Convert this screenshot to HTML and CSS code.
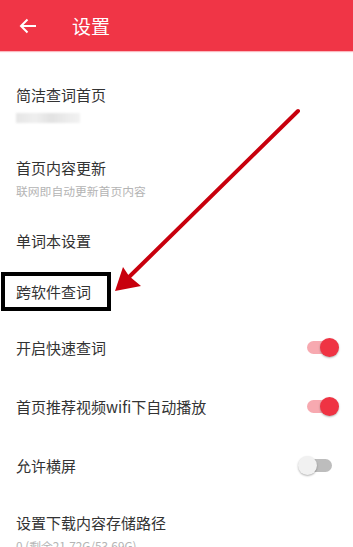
FILE: index.html
```html
<!DOCTYPE html>
<html lang="zh-CN">
<head>
    <meta charset="UTF-8">
    <meta name="viewport" content="width=device-width, initial-scale=1.0">
    <title>设置</title>
    <link rel="stylesheet" href="styles.css">
</head>
<body>
    <header class="top-bar">
        <button class="back-button">
            <svg viewBox="0 0 18 16">
                <path d="M17 8H2M8.5 1.5L2 8l6.5 6.5"></path>
            </svg>
        </button>
        <h1>设置</h1>
    </header>

    <ul class="settings-list">
        <li class="setting">
            <div class="setting-text">
                <span class="title">简洁查词首页</span>
                <span class="sub"><i class="blurred"></i></span>
            </div>
        </li>
        <li class="setting">
            <div class="setting-text">
                <span class="title">首页内容更新</span>
                <span class="sub">联网即自动更新首页内容</span>
            </div>
        </li>
        <li class="setting setting-tight">
            <div class="setting-text">
                <span class="title">单词本设置</span>
            </div>
        </li>
        <li class="setting">
            <div class="setting-text">
                <span class="title">跨软件查词</span>
            </div>
        </li>
        <li class="setting setting-switch">
            <div class="setting-text">
                <span class="title">开启快速查词</span>
            </div>
            <span class="switch on"></span>
        </li>
        <li class="setting setting-switch">
            <div class="setting-text">
                <span class="title">首页推荐视频wifi下自动播放</span>
            </div>
            <span class="switch on"></span>
        </li>
        <li class="setting setting-switch">
            <div class="setting-text">
                <span class="title">允许横屏</span>
            </div>
            <span class="switch"></span>
        </li>
        <li class="setting setting-last">
            <div class="setting-text">
                <span class="title">设置下载内容存储路径</span>
                <span class="sub">0 (剩余21.72G/53.69G)</span>
            </div>
        </li>
    </ul>

    <!-- annotation drawn over the screenshot -->
    <div class="mark-box"></div>
    <svg class="mark-arrow" viewBox="0 0 353 547">
        <line x1="298" y1="111" x2="127" y2="279"></line>
        <polygon points="115,291 123,267 129,276 141,286"></polygon>
    </svg>
</body>
</html>
```

FILE: styles.css
```css
body {
    margin: 0;
    height: 547px;
    overflow: hidden;
    background: #fff;
    font-family: "Noto Sans CJK SC", "Noto Sans", sans-serif;
    color: #333;
    position: relative;
}

.top-bar {
    height: 51px;
    background-color: #f03546;
    display: flex;
    align-items: center;
    box-shadow: 0 1px 1px rgba(240, 53, 70, 0.35);
}

.back-button {
    background: none;
    border: none;
    padding: 0;
    margin-left: 19px;
    width: 18px;
    height: 16px;
    display: flex;
}

.back-button svg {
    width: 18px;
    height: 16px;
    fill: none;
    stroke: #fff;
    stroke-width: 2;
}

.top-bar h1 {
    margin: 0 0 0 35px;
    font-size: 19px;
    font-weight: normal;
    color: #fff;
    line-height: 1;
}

.settings-list {
    list-style: none;
    margin: 0;
    padding: 18px 0 0;
}

.setting {
    display: flex;
    align-items: center;
    padding: 16px 13px 16px 16px;
}

.setting-tight {
    padding-bottom: 15px;
}

.setting-switch {
    padding-top: 19.5px;
    padding-bottom: 19.5px;
}

.setting-last {
    padding-top: 18px;
}

.setting-text {
    flex: 1;
    display: flex;
    flex-direction: column;
}

.title {
    font-size: 15px;
    line-height: 20px;
}

.sub {
    margin-top: 5px;
    height: 16px;
    font-size: 11.8px;
    line-height: 16px;
    color: #b4b4b4;
    display: flex;
    align-items: center;
}

.blurred {
    display: block;
    width: 64px;
    height: 10px;
    background: linear-gradient(90deg, #e6e6e6, #efefef 30%, #e2e2e2 55%, #ececec 80%, #f2f2f2);
    filter: blur(1px);
}

/* 开关 */
.switch {
    position: relative;
    width: 26px;
    height: 13px;
    border-radius: 7px;
    background-color: #bdbdbd;
    margin-right: 8px;
}

.switch::after {
    content: "";
    position: absolute;
    top: -3px;
    left: -8px;
    width: 19px;
    height: 19px;
    border-radius: 50%;
    background-color: #f1f1f1;
    box-shadow: 0 1px 2px rgba(0, 0, 0, 0.3);
}

.switch.on {
    background-color: #f7a9b0;
    margin-right: 7px;
}

.switch.on::after {
    left: 13px;
    background-color: #ef3343;
}

.mark-box {
    position: absolute;
    left: 1px;
    top: 272px;
    width: 102px;
    height: 31px;
    border: 4px solid #000;
}

.mark-arrow {
    position: absolute;
    left: 0;
    top: 0;
    width: 353px;
    height: 547px;
    pointer-events: none;
}

.mark-arrow line {
    stroke: #c8000d;
    stroke-width: 4;
    stroke-linecap: round;
}

.mark-arrow polygon {
    fill: #c8000d;
}
```
